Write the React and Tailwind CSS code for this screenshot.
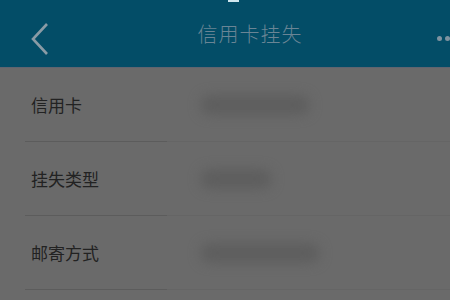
import React from "react";

const rows = [
  { label: "信用卡", w: "w-[110px]" },
  { label: "挂失类型", w: "w-[72px]" },
  { label: "邮寄方式", w: "w-[120px]" },
];

const App = () => {
  return (
    <div
      className="w-[450px] h-[300px] overflow-hidden bg-[#6a6a6a]"
      style={{ fontFamily: '"Noto Sans CJK SC", "Noto Sans", sans-serif' }}
    >
      <div className="relative h-[67px] bg-[#034d67] flex items-center justify-center">
        <div className="absolute top-0 left-0 right-0 h-[3px] flex">
          <div className="ml-[228px] w-[11px] h-[2px] bg-[#cfe6ee]" />
        </div>
        <svg
          className="absolute left-[30px] top-[22px]"
          width="20"
          height="34"
          viewBox="0 0 20 34"
          fill="none"
        >
          <path d="M17 2 L3 17 L17 32" stroke="#8a9ba5" strokeWidth="2.6" />
        </svg>
        <span className="ml-[50px] text-[20px] font-light text-[#6a8595] tracking-[1px]">信用卡挂失</span>
        <div className="absolute left-[437px] top-[36px] flex gap-[3px]">
          <div className="w-[5px] h-[5px] rounded-full bg-[#7f93a0]" />
          <div className="w-[5px] h-[5px] rounded-full bg-[#7f93a0]" />
        </div>
      </div>
      <div className="border-t border-[#5e6470]">
        {rows.map((r) => (
          <div key={r.label} className="h-[74px] flex flex-col">
            <div className="flex-1 flex items-center">
              <span className="ml-[31px] w-[169px] text-[17px] text-[#222222]">{r.label}</span>
              <div className={"h-[20px] rounded-full bg-[#5e5e5e] blur-[6px] " + r.w} />
            </div>
            <div className="flex h-px">
              <div className="ml-[25px] w-[142px] bg-[#5c5c5c]" />
              <div className="flex-1 bg-[#656565]" />
            </div>
          </div>
        ))}
      </div>
    </div>
  );
};

export default App;
